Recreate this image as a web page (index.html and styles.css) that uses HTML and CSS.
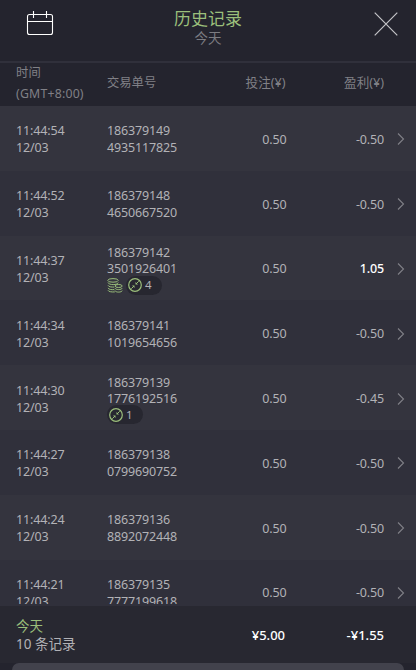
FILE: index.html
```html
<!DOCTYPE html>
<html lang="zh-CN">
<head>
  <meta charset="UTF-8">
  <meta name="viewport" content="width=device-width, initial-scale=1.0">
  <title>历史记录</title>
  <link rel="stylesheet" href="styles.css">
</head>
<body>
  <svg class="symbols" width="0" height="0">
    <symbol id="arrow" viewBox="0 0 8 14">
      <path d="M1 1.5L6.5 7L1 12.5" fill="none" stroke="currentColor" stroke-width="1.1" />
    </symbol>
    <symbol id="spin" viewBox="0 0 14 14">
      <circle cx="7" cy="7" r="6.3" fill="none" stroke="currentColor" stroke-width="1.2" />
      <path d="M3.3 10.7L6 8M8 6L10.7 3.3" stroke="currentColor" stroke-width="1" />
      <path d="M4 7.5H6.5V10ZM7.5 4V6.5H10Z" fill="currentColor" />
    </symbol>
    <symbol id="coins" viewBox="0 0 16 15">
      <g fill="none" stroke="currentColor" stroke-width="1">
        <ellipse cx="6" cy="2.4" rx="5.2" ry="1.8" />
        <path d="M1 4.5c.6 2.8 9.8 2.8 10.2 0M1 7.3c.5 1.5 3.5 2 6.3 1.7M1 9.9c.5 1.5 3.5 2 6.3 1.7M1 12.3c.5 1.3 3.5 1.9 6.8 1.6" />
        <ellipse cx="11.6" cy="8" rx="3.6" ry="1.5" />
        <path d="M8 10.1c.6 2 6.6 2 7.2 0M8 12.6c.6 2 6.6 2 7.2 0" />
      </g>
    </symbol>
  </svg>

  <div class="history">
    <header class="top-bar">
      <svg class="calendar" width="28" height="26" viewBox="0 0 28 26" fill="none" stroke="#fff" stroke-width="1.1">
        <rect x="1.5" y="3.5" width="25" height="20" rx="2" />
        <path d="M1.5 10.5H26.5M7.5 0V7M20.5 0V7" />
      </svg>
      <div class="title">
        <h1>历史记录</h1>
        <p>今天</p>
      </div>
      <svg class="close" width="24" height="24" viewBox="0 0 24 24" fill="none" stroke="#c4c4c8" stroke-width="1.2">
        <path d="M.7 .7L23.3 23.3M23.3 .7L.7 23.3" />
      </svg>
    </header>

    <div class="columns record-grid">
      <div class="head-time">时间<br>(GMT+8:00)</div>
      <div>交易单号</div>
      <div class="bet">投注(¥)</div>
      <div class="profit">盈利(¥)</div>
    </div>

    <div class="record-list">
      <div class="record record-grid">
        <div>11:44:54<br>12/03</div>
        <div>186379149<br>4935117825</div>
        <div class="bet">0.50</div>
        <div class="profit">-0.50</div>
        <svg class="arrow"><use href="#arrow" /></svg>
      </div>
      <div class="record record-grid">
        <div>11:44:52<br>12/03</div>
        <div>186379148<br>4650667520</div>
        <div class="bet">0.50</div>
        <div class="profit">-0.50</div>
        <svg class="arrow"><use href="#arrow" /></svg>
      </div>
      <div class="record record-grid">
        <div>11:44:37<br>12/03</div>
        <div class="order">
          186379142<br>3501926401
          <div class="tags">
            <svg class="coins"><use href="#coins" /></svg>
            <span class="badge"><svg class="spin"><use href="#spin" /></svg>4</span>
          </div>
        </div>
        <div class="bet">0.50</div>
        <div class="profit win">1.05</div>
        <svg class="arrow"><use href="#arrow" /></svg>
      </div>
      <div class="record record-grid">
        <div>11:44:34<br>12/03</div>
        <div>186379141<br>1019654656</div>
        <div class="bet">0.50</div>
        <div class="profit">-0.50</div>
        <svg class="arrow"><use href="#arrow" /></svg>
      </div>
      <div class="record record-grid">
        <div>11:44:30<br>12/03</div>
        <div class="order">
          186379139<br>1776192516
          <div class="tags">
            <span class="badge"><svg class="spin"><use href="#spin" /></svg>1</span>
          </div>
        </div>
        <div class="bet">0.50</div>
        <div class="profit">-0.45</div>
        <svg class="arrow"><use href="#arrow" /></svg>
      </div>
      <div class="record record-grid">
        <div>11:44:27<br>12/03</div>
        <div>186379138<br>0799690752</div>
        <div class="bet">0.50</div>
        <div class="profit">-0.50</div>
        <svg class="arrow"><use href="#arrow" /></svg>
      </div>
      <div class="record record-grid">
        <div>11:44:24<br>12/03</div>
        <div>186379136<br>8892072448</div>
        <div class="bet">0.50</div>
        <div class="profit">-0.50</div>
        <svg class="arrow"><use href="#arrow" /></svg>
      </div>
      <div class="record record-grid">
        <div>11:44:21<br>12/03</div>
        <div>186379135<br>7777199618</div>
        <div class="bet">0.50</div>
        <div class="profit">-0.50</div>
        <svg class="arrow"><use href="#arrow" /></svg>
      </div>
    </div>

    <footer class="summary">
      <div class="summary-info">
        <div class="summary-day">今天</div>
        <div>10 条记录</div>
      </div>
      <div class="total-bet">¥5.00</div>
      <div class="total-profit">-¥1.55</div>
    </footer>
    <div class="sheet-edge"></div>
  </div>
</body>
</html>
```
FILE: styles.css
```css
body {
  margin: 0;
  background-color: #24242e;
  font-family: "Noto Sans", "Noto Sans CJK SC", sans-serif;
  color: #b2b2b6;
}

.symbols {
  position: absolute;
}

.history {
  display: flex;
  flex-direction: column;
  height: 670px;
  overflow: hidden;
}

.top-bar {
  box-sizing: border-box;
  flex: 0 0 63px;
  display: grid;
  grid-template-columns: 1fr auto 1fr;
  align-items: start;
  padding: 11px 18px 0 26px;
  border-bottom: 2px solid #30303b;
}

.title {
  margin-top: -4px;
  margin-right: 8px;
  text-align: center;
}

.title h1 {
  margin: 0;
  font-size: 17px;
  font-weight: 400;
  line-height: 23px;
  color: #9bbf7b;
}

.title p {
  margin: 0;
  font-size: 13.5px;
  line-height: 17px;
  color: #7c7c82;
}

.close {
  margin-top: 1px;
  justify-self: end;
}

.record-grid {
  display: grid;
  grid-template-columns: 91px 94px 85.5px 97.5px 1fr;
  align-items: center;
  padding-left: 16px;
}

.bet,
.profit {
  text-align: right;
}

.columns {
  flex: 0 0 43px;
  font-size: 12.3px;
  line-height: 18px;
  color: #808086;
}

.columns div {
  margin-top: -3px;
}

.columns .bet,
.columns .profit {
  font-size: 12.6px;
}

.columns .bet {
  margin-right: 1px;
}

.columns .head-time {
  line-height: 21px;
  letter-spacing: 0.2px;
}

.record-list {
  flex: 0 0 498px;
  overflow: hidden;
  border-bottom: 2px solid #30303b;
}

.record {
  box-sizing: border-box;
  height: 64.8px;
  padding-top: 2px;
  font-size: 12.5px;
  line-height: 17px;
  letter-spacing: -0.15px;
  background-color: #30303b;
}

.record:nth-child(odd) {
  background-color: #34343e;
}

.order {
  padding-top: 2px;
  line-height: 16px;
}

.win {
  color: #fff;
  font-weight: 500;
}

.arrow {
  width: 8px;
  height: 14px;
  margin-left: 13px;
  color: #808087;
}

.tags {
  display: flex;
  align-items: center;
  gap: 3px;
  margin-top: -1.5px;
  color: #9bbf7b;
}

.coins {
  width: 16px;
  height: 15px;
}

.badge {
  display: flex;
  align-items: center;
  gap: 3px;
  box-sizing: border-box;
  width: 36px;
  height: 19px;
  padding-left: 2px;
  border-radius: 10px;
  background-color: #272730;
  color: #b2b2b6;
  font-size: 11.5px;
}

.spin {
  width: 14px;
  height: 14px;
  color: #9bbf7b;
}

.summary {
  box-sizing: border-box;
  flex: 0 0 57px;
  display: grid;
  grid-template-columns: 185px 84px 99px;
  align-items: center;
  padding-left: 16px;
  background-color: #282831;
}

.summary-info {
  font-size: 13.5px;
  line-height: 18px;
}

.summary-day {
  color: #9bbf7b;
}

.total-bet,
.total-profit {
  padding-top: 1px;
  text-align: right;
  font-size: 13px;
  font-weight: 500;
  color: #fff;
}

.sheet-edge {
  flex: 0 0 7px;
  margin: 0 12px;
  border-radius: 8px 8px 0 0;
  background-color: #42424c;
}
```
